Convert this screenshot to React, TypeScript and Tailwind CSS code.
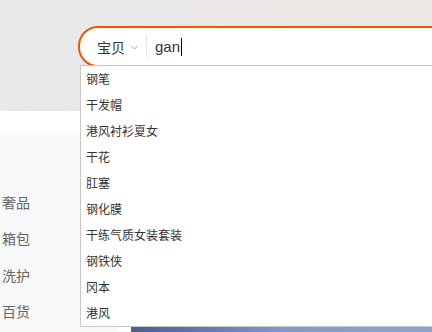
import React from "react";

const items = [
  "钢笔",
  "干发帽",
  "港风衬衫夏女",
  "干花",
  "肛塞",
  "钢化膜",
  "干练气质女装套装",
  "钢铁侠",
  "冈本",
  "港风",
];

const menu = ["奢品", "箱包", "洗护", "百货"];

export default function App() {
  const font = { fontFamily: '"Noto Sans CJK SC", "Liberation Sans", sans-serif' };
  return (
    <div
      className="relative w-[432px] h-[332px] overflow-hidden bg-white"
      style={font}
    >
      {/* header */}
      <div className="h-[111px] bg-gradient-to-r from-[#e9e8ea] to-[#ede8e5] pt-[26px] pl-[78px]">
        <div className="w-[420px] h-[41px] border-2 border-[#ff5000] rounded-l-[20px] bg-white flex items-center">
          <span className="ml-[17px] text-[14px] text-[#333] leading-none">宝贝</span>
          <svg width="7" height="5" viewBox="0 0 7 5" className="ml-[6px] mt-[2px]">
            <path d="M0.5 1 L3.5 4 L6.5 1" stroke="#aaa" strokeWidth="1" fill="none" />
          </svg>
          <div className="ml-[8px] w-px h-[23px] bg-[#e5e5e5]" />
          <span
            className="ml-[8px] text-[15px] text-[#333] leading-none"
            style={{ fontFamily: '"Liberation Sans", sans-serif' }}
          >
            gan
          </span>
          <div className="w-px h-[18px] bg-black ml-px" />
        </div>
      </div>
      {/* white band */}
      <div className="h-[24px] bg-white" />
      {/* body */}
      <div className="flex h-[197px]">
        <div className="w-[117px] bg-[#f7f8fa] pt-[49px] flex flex-col">
          {menu.map((m) => (
            <div key={m} className="h-[36.5px] flex items-center pl-[2px] text-[14px] text-[#666]">
              {m}
            </div>
          ))}
        </div>
        <div className="flex-1 flex flex-col justify-end">
          <div className="ml-[14px] h-[5px] bg-gradient-to-r from-[#4a5f8c] via-[#8199c4] to-[#8ea4cc]" />
        </div>
      </div>

      {/* dropdown overlay */}
      <div className="absolute z-10 left-[80px] top-[65px] w-[400px] bg-white border border-[#c8c8c8] flex flex-col">
        {items.map((t) => (
          <div key={t} className="h-[26px] flex items-center pl-[5px] text-[12px] text-[#333]">
            {t}
          </div>
        ))}
      </div>
    </div>
  );
}
